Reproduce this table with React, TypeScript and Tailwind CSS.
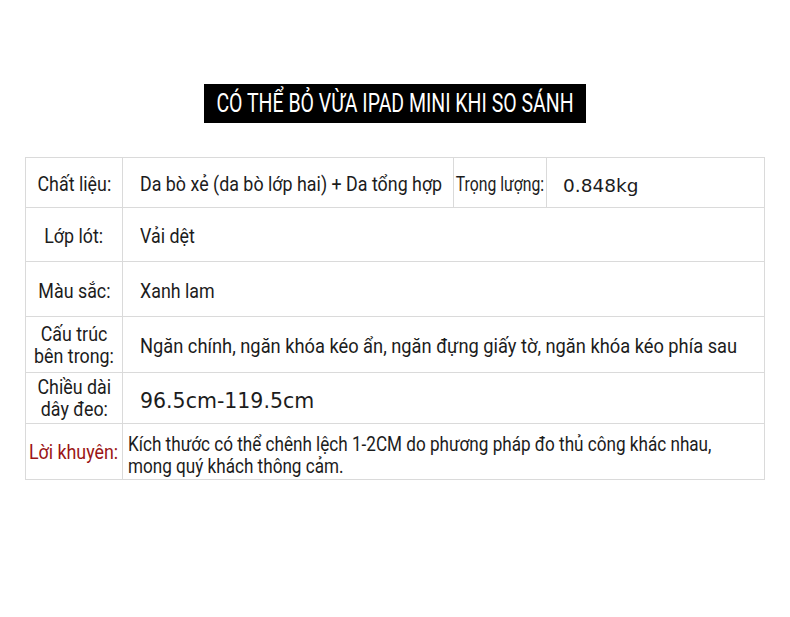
import type { ReactNode } from 'react';

// Condensed look: Roboto squeezed horizontally (no narrow face is installed)
function N({ children, className = '' }: { children: ReactNode; className?: string }) {
  return <span className={`inline-block whitespace-nowrap ${className}`}>{children}</span>;
}

// centred label, may overflow both sides evenly before scaling
function L({ children, className = '' }: { children: ReactNode; className?: string }) {
  return (
    <div className={`flex justify-center ${className}`}>
      <N className="scale-x-[0.85] shrink-0">{children}</N>
    </div>
  );
}

export default function App() {
  const cell = 'border border-[#dadada]';
  const wide = { fontFamily: '"DejaVu Sans", sans-serif' };
  return (
    <div className="w-[790px] h-[617px] bg-white text-[#1c1c1c] overflow-hidden" style={{ fontFamily: 'Roboto, sans-serif' }}>
      <div className="flex justify-center pt-[84px]">
        <div className="w-[382px] h-[39px] bg-black text-white flex items-center justify-center overflow-hidden">
          <N className="text-[25px] scale-x-[0.78] origin-center leading-none shrink-0">CÓ THỂ BỎ VỪA IPAD MINI KHI SO SÁNH</N>
        </div>
      </div>
      <table className="ml-[25px] mt-[34px] w-[739px] border-collapse text-[21px] table-fixed">
        <colgroup>
          <col className="w-[97px]" />
          <col className="w-[331px]" />
          <col className="w-[93px]" />
          <col className="w-[218px]" />
        </colgroup>
        <tbody>
          <tr className="h-[50px]">
            <td className={`${cell} pt-[5px]`}><L>Chất liệu:</L></td>
            <td className={`${cell} pl-[17px] pt-[5px]`}><N className="scale-x-[0.85] origin-left">Da bò xẻ (da bò lớp hai) + Da tổng hợp</N></td>
            <td className={`${cell} pt-[5px]`}>
              <div className="flex justify-center">
                <N className="scale-x-[0.75] shrink-0">Trọng lượng:</N>
              </div>
            </td>
            <td className={`${cell} pl-[16px] pt-[6px] text-[18.5px]`} style={wide}>0.848kg</td>
          </tr>
          <tr className="h-[54px]">
            <td className={`${cell} pt-[5px]`}><L>Lớp lót:</L></td>
            <td colSpan={3} className={`${cell} pl-[17px] pt-[5px]`}><N className="scale-x-[0.85] origin-left">Vải dệt</N></td>
          </tr>
          <tr className="h-[55px]">
            <td className={`${cell} pt-[5px]`}><L>Màu sắc:</L></td>
            <td colSpan={3} className={`${cell} pl-[17px] pt-[5px]`}><N className="scale-x-[0.85] origin-left">Xanh lam</N></td>
          </tr>
          <tr className="h-[56px]">
            <td className={`${cell} leading-[22px]`}><L className="text-center">Cấu trúc<br />bên trong:</L></td>
            <td colSpan={3} className={`${cell} pl-[17px] pt-[4px]`}><N className="scale-x-[0.87] origin-left">Ngăn chính, ngăn khóa kéo ẩn, ngăn đựng giấy tờ, ngăn khóa kéo phía sau</N></td>
          </tr>
          <tr className="h-[51px]">
            <td className={`${cell} leading-[22px]`}><L className="text-center">Chiều dài<br />dây đeo:</L></td>
            <td colSpan={3} className={`${cell} pl-[17px] pt-[6px] text-[20.5px]`} style={wide}>96.5cm-119.5cm</td>
          </tr>
          <tr className="h-[56px]">
            <td className={`${cell} text-[#9b1515] pt-[2px]`}><L>Lời khuyên:</L></td>
            <td colSpan={3} className={`${cell} pl-[5px] leading-[22px] align-top pt-[9px]`}>
              <N className="scale-x-[0.815] origin-left">Kích thước có thể chênh lệch 1-2CM do phương pháp đo thủ công khác nhau,<br />mong quý khách thông cảm.</N>
            </td>
          </tr>
        </tbody>
      </table>
    </div>
  );
}
